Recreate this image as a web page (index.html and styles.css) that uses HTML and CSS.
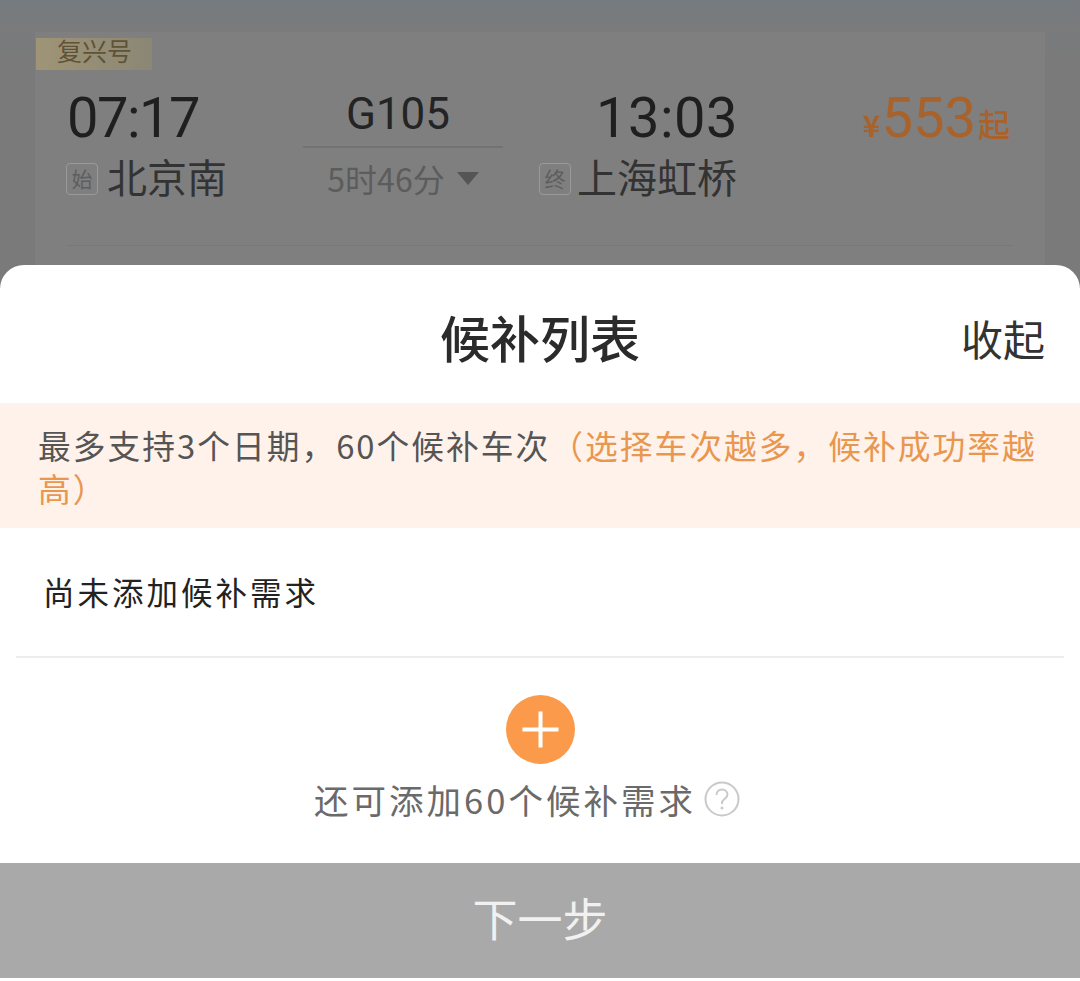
FILE: index.html

```html
<!doctype html>
<html>
<head>
<meta charset="utf-8">
<title>候补列表</title>
<link rel="stylesheet" href="styles.css">
</head>

<body>
<div class="page">
	<div class="behind">
		<div class="card">
			<div class="badge">复兴号</div>
			<div class="train">
				<div class="col col-from">
					<div class="time">07:17</div>
					<div class="station"><span class="tag">始</span>北京南</div>
				</div>
				<div class="col col-mid">
					<div class="code">G105</div>
					<div class="during">5时46分<svg class="caret" width="22" height="13" viewBox="0 0 22 13"><path d="M0 0H22L11 13Z"/></svg></div>
				</div>
				<div class="col col-to">
					<div class="time time-end">13:03</div>
					<div class="station"><span class="tag tag-end">终</span>上海虹桥</div>
				</div>
				<div class="price"><span class="yen">¥</span><span class="num">553</span><span class="qi">起</span></div>
			</div>
			<div class="card-line"></div>
		</div>
	</div>
	<div class="sheet">
		<div class="head">
			<div class="title">候补列表</div>
			<div class="close">收起</div>
		</div>
		<div class="notice">最多支持3个日期，60个候补车次<span class="hot">（选择车次越多，候补成功率越</span><br><span class="hot">高）</span></div>
		<div class="empty">尚未添加候补需求</div>
		<div class="add">
			<svg class="plus" width="69" height="69" viewBox="0 0 69 69"><circle cx="34.500" cy="34.500" r="34.500" fill="#fb9a4b"/><path d="M16.500 34.500H52.500M34.500 16.500V52.500" stroke="#fff" stroke-width="4" fill="none"/></svg>
			<div class="add-text">还可添加60个候补需求<svg class="help" width="36" height="36" viewBox="0 0 36 36"><circle cx="18" cy="18" r="16.500" fill="none" stroke="#c9c9c9" stroke-width="2"/><path d="M12.500 14c0-3.300 2.400-5.500 5.500-5.500s5.500 2.200 5.500 5c0 2.300-1.400 3.300-3 4.500-1.500 1.100-2.500 2-2.500 4v1" fill="none" stroke="#c9c9c9" stroke-width="2"/><circle cx="18" cy="27" r="1.500" fill="#c9c9c9"/></svg></div>
		</div>
		<div class="next">下一步</div>
	</div>
</div>
</body>
</html>
```

FILE: styles.css

```css
*{ margin:0; padding:0; box-sizing:border-box;}
html,body{ height:100%; background:#fff;}
body{ font-family:"Noto Sans CJK SC","Noto Sans",sans-serif; overflow:hidden;}
.page{ width:1080px; height:981px; display:flex; flex-direction:column; background:linear-gradient(#767b80 0,#797b7d 24px,#7a7a7a 60px);}

.behind{ height:265px; padding:32px 35px 0 35px; overflow:hidden;}
.card{ height:233px; padding-top:6px; background:#7f7f7f; position:relative;}
.badge{ width:116px; height:32px; margin-left:1px; line-height:24px; padding-left:21px; font-size:25px; color:#5f5236; background:linear-gradient(90deg,#9f9476,#8b8775);}
.train{ display:flex; padding:20px 0 0 32px;}
.col{ display:flex; flex-direction:column;}
.col-from{ width:236px;}
.col-mid{ width:200px; align-items:center;}
.col-to{ width:200px; margin-left:34px; align-items:flex-end;}
.time{ font-family:Roboto,sans-serif; font-size:56px; line-height:56px; height:56px; letter-spacing:-1.500px; color:#1f1f1f;}
.time-end{ letter-spacing:0.500px; margin-right:-1px;}
.station{ display:flex; align-items:center; margin-top:7px; height:46px; font-size:40px; color:#333;}
.tag{ width:32px; height:32px; line-height:28px; margin:6px 9px 0 -1px; border:1px solid #9a9a9a; border-radius:4px; font-size:21px; text-align:center; color:#5e5e5e;}
.tag-end{ margin-right:6px;}
.code{ width:200px; height:58px; line-height:48px; padding-right:10px; text-align:center; font-family:Roboto,sans-serif; font-size:44px; color:#242424; border-bottom:2px solid #737373;}
.during{ display:flex; align-items:center; margin-top:7px; height:46px; font-size:32px; color:#5c5c5c;}
.caret{ margin-left:12px; fill:#555;}
.price{ flex:1; display:flex; align-items:baseline; justify-content:flex-end; padding-right:35px; height:56px; color:#a9622a;}
.yen{ font-size:30px; font-weight:bold; margin-right:1px;}
.num{ font-family:Roboto,sans-serif; font-size:56px; line-height:56px; margin-right:2px;}
.qi{ font-size:32px; font-weight:500;}
.card-line{ position:absolute; left:32px; right:32px; top:213px; height:1px; background:#787878;}

.sheet{ flex:1; display:flex; flex-direction:column; background:#fff; border-radius:24px 24px 0 0;}
.head{ height:138px; position:relative; text-align:center; line-height:142px;}
.title{ font-size:50px; font-weight:500; color:#2b2b2b;}
.close{ position:absolute; right:35px; top:0; font-size:42px; line-height:146px; color:#333;}
.notice{ height:125px; padding:20px 0 0 38px; background:#fef2ea; font-size:32.750px; letter-spacing:2px; line-height:43px; color:#555; white-space:nowrap;}
.hot{ color:#e9964f;}
.empty{ height:130px; margin:0 16px; padding:38px 0 0 27px; font-size:31.500px; letter-spacing:3px; line-height:50px; color:#222; border-bottom:2px solid #ececec;}
.add{ height:205px; padding-top:37px; display:flex; flex-direction:column; align-items:center;}
.add-text{ display:flex; align-items:center; height:50px; margin-top:10px; padding-right:26px; font-size:34.500px; letter-spacing:3px; color:#6a6a6a;}
.help{ margin-left:8px;}
.next{ height:115px; line-height:110px; text-align:center; font-size:45px; color:#f1f1f1; background:#a9a9a9;}
```
